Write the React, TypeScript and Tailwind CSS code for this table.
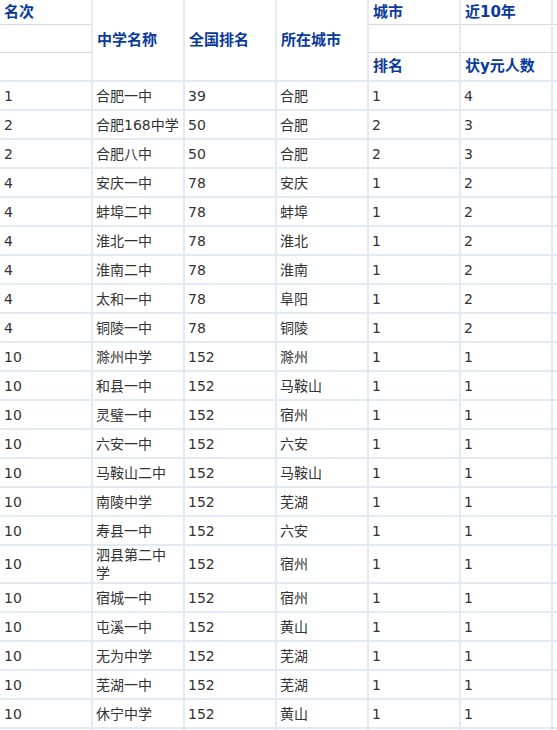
const rows: string[][] = [
  ["1", "合肥一中", "39", "合肥", "1", "4"],
  ["2", "合肥168中学", "50", "合肥", "2", "3"],
  ["2", "合肥八中", "50", "合肥", "2", "3"],
  ["4", "安庆一中", "78", "安庆", "1", "2"],
  ["4", "蚌埠二中", "78", "蚌埠", "1", "2"],
  ["4", "淮北一中", "78", "淮北", "1", "2"],
  ["4", "淮南二中", "78", "淮南", "1", "2"],
  ["4", "太和一中", "78", "阜阳", "1", "2"],
  ["4", "铜陵一中", "78", "铜陵", "1", "2"],
  ["10", "滁州中学", "152", "滁州", "1", "1"],
  ["10", "和县一中", "152", "马鞍山", "1", "1"],
  ["10", "灵璧一中", "152", "宿州", "1", "1"],
  ["10", "六安一中", "152", "六安", "1", "1"],
  ["10", "马鞍山二中", "152", "马鞍山", "1", "1"],
  ["10", "南陵中学", "152", "芜湖", "1", "1"],
  ["10", "寿县一中", "152", "六安", "1", "1"],
  ["10", "泗县第二中学", "152", "宿州", "1", "1"],
  ["10", "宿城一中", "152", "宿州", "1", "1"],
  ["10", "屯溪一中", "152", "黄山", "1", "1"],
  ["10", "无为中学", "152", "芜湖", "1", "1"],
  ["10", "芜湖一中", "152", "芜湖", "1", "1"],
  ["10", "休宁中学", "152", "黄山", "1", "1"],
  ["", "", "", "", "", ""],
];

const font = { fontFamily: '"DejaVu Sans", "Noto Sans CJK SC", sans-serif' };

// stacked header cell: top row, blank row, bottom row split by thin gray lines
function StackedHead({ top, bottom }: { top?: string; bottom?: string }) {
  return (
    <div className="bg-white flex flex-col">
      <div className="h-[24px] flex items-center pl-[4px]">{top}</div>
      <div className="h-px bg-[#d9d9d9]" />
      <div className="h-[27px]" />
      <div className="h-px bg-[#d9d9d9]" />
      <div className="h-[27px] flex items-center pl-[4px]">{bottom}</div>
    </div>
  );
}

function SpanHead({ label }: { label: string }) {
  return <div className="bg-white flex items-center pl-[4px]">{label}</div>;
}

export default function App() {
  return (
    <div className="w-[557px] h-[730px] overflow-hidden bg-white" style={font}>
      <div className="w-[660px] grid grid-cols-[91px_90px_90px_90px_90px_90px_100px] gap-[2px] bg-[#e2ebf5]">
        <div className="contents text-[15px] font-bold text-[#0a3a9c]">
          <StackedHead top="名次" />
          <SpanHead label="中学名称" />
          <SpanHead label="全国排名" />
          <SpanHead label="所在城市" />
          <StackedHead top="城市" bottom="排名" />
          <StackedHead top="近10年" bottom="状y元人数" />
          <StackedHead />
        </div>
        {rows.map((r, i) => (
          <div key={i} className="contents text-[14px] leading-[18px] text-[#333]">
            {r.map((c, j) => (
              <div
                key={j}
                className={`bg-white min-h-[27px] flex items-center ${
                  j === 0 ? "pl-[4px]" : "pl-[3px] pr-[4px]"
                }`}
              >
                {c}
              </div>
            ))}
            <div className="bg-white min-h-[27px]" />
          </div>
        ))}
      </div>
    </div>
  );
}
